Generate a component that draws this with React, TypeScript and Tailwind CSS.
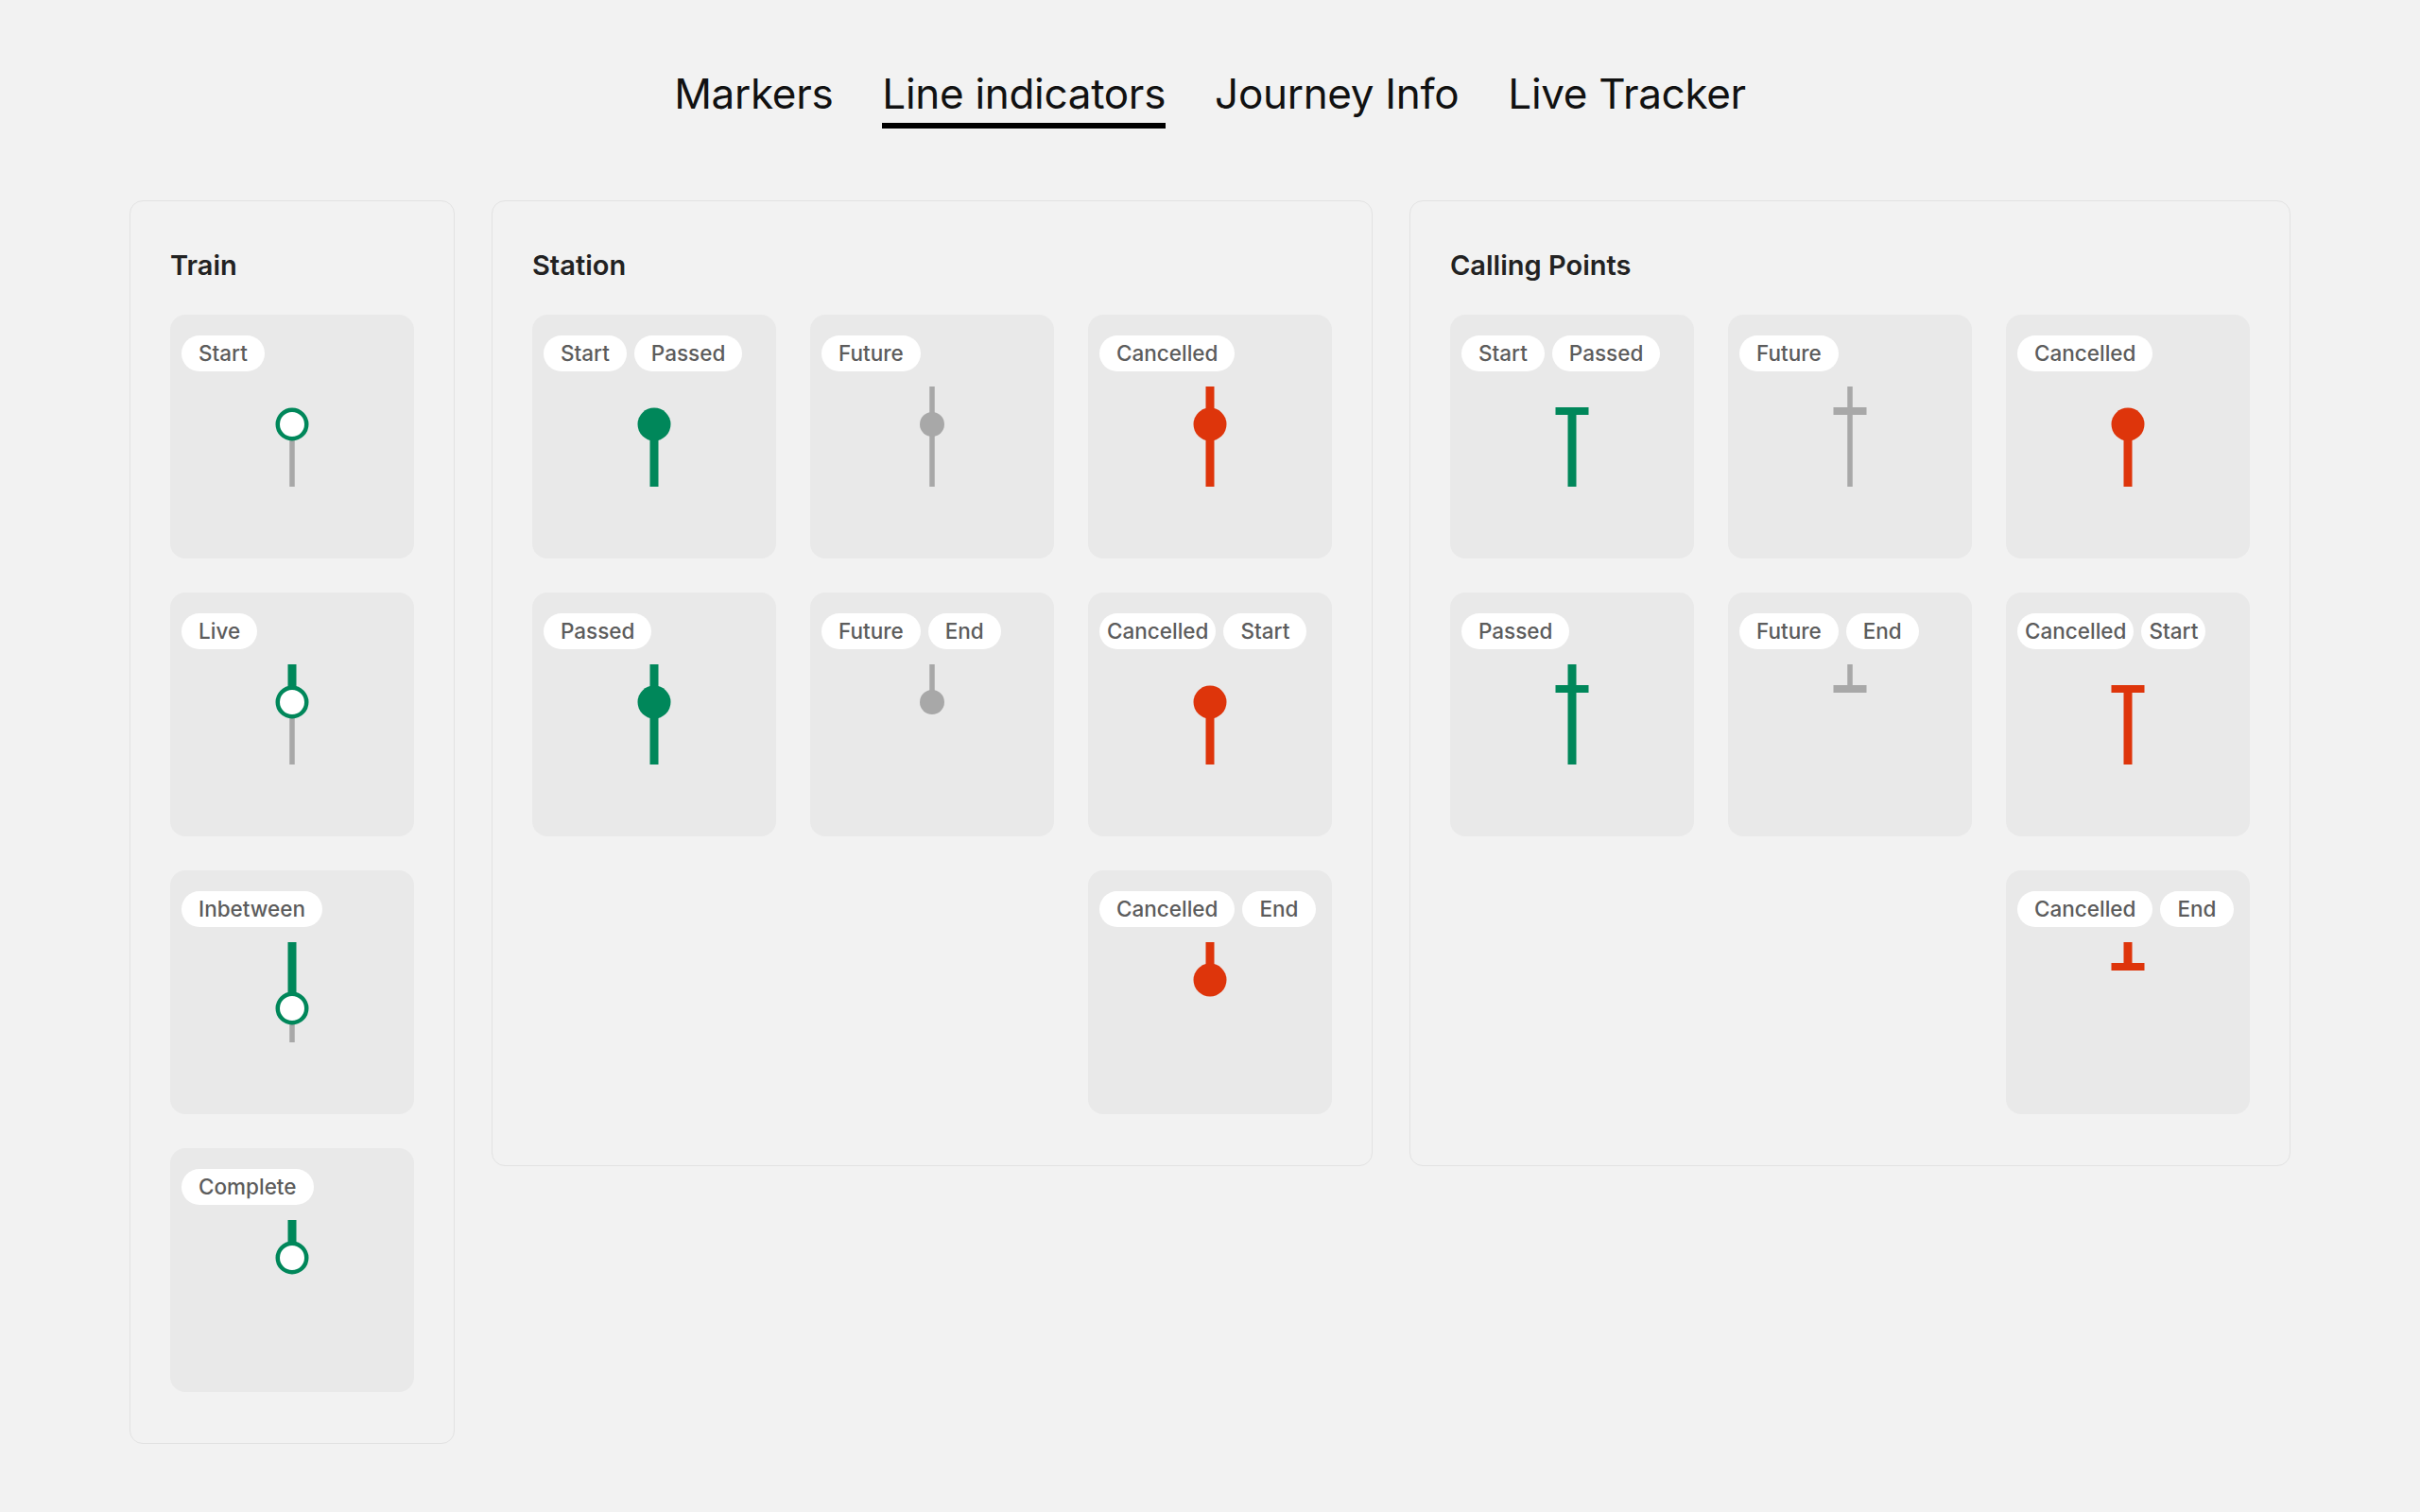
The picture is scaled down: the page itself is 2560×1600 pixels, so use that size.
type Tone = "green" | "red" | "gray";

const COLORS: Record<Tone, string> = {
  green: "#00875A",
  red: "#DE350B",
  gray: "#A8A8A8",
};

type Shape =
  | { kind: "line"; tone: Tone; from: number; to: number }
  | { kind: "dot"; tone: Tone; y: number }
  | { kind: "ring"; y: number }
  | { kind: "bar"; tone: Tone };

type Label = { text: string; tight?: boolean };

type CardData = { labels: Label[]; shapes: Shape[]; col?: number };

// y values are measured from the top of the indicator area (card top + 76)
const MID = 40;
const END = 106;

const trainCards: CardData[] = [
  {
    labels: [{ text: "Start" }],
    shapes: [
      { kind: "line", tone: "gray", from: MID, to: END },
      { kind: "ring", y: MID },
    ],
  },
  {
    labels: [{ text: "Live" }],
    shapes: [
      { kind: "line", tone: "green", from: 0, to: MID },
      { kind: "line", tone: "gray", from: MID, to: END },
      { kind: "ring", y: MID },
    ],
  },
  {
    labels: [{ text: "Inbetween" }],
    shapes: [
      { kind: "line", tone: "green", from: 0, to: 70 },
      { kind: "line", tone: "gray", from: 70, to: END },
      { kind: "ring", y: 70 },
    ],
  },
  {
    labels: [{ text: "Complete" }],
    shapes: [
      { kind: "line", tone: "green", from: 0, to: MID },
      { kind: "ring", y: MID },
    ],
  },
];

const stationCards: CardData[] = [
  {
    labels: [{ text: "Start" }, { text: "Passed" }],
    shapes: [
      { kind: "line", tone: "green", from: MID, to: END },
      { kind: "dot", tone: "green", y: MID },
    ],
  },
  {
    labels: [{ text: "Future" }],
    shapes: [
      { kind: "line", tone: "gray", from: 0, to: END },
      { kind: "dot", tone: "gray", y: MID },
    ],
  },
  {
    labels: [{ text: "Cancelled" }],
    shapes: [
      { kind: "line", tone: "red", from: 0, to: END },
      { kind: "dot", tone: "red", y: MID },
    ],
  },
  {
    labels: [{ text: "Passed" }],
    shapes: [
      { kind: "line", tone: "green", from: 0, to: END },
      { kind: "dot", tone: "green", y: MID },
    ],
  },
  {
    labels: [{ text: "Future" }, { text: "End" }],
    shapes: [
      { kind: "line", tone: "gray", from: 0, to: MID },
      { kind: "dot", tone: "gray", y: MID },
    ],
  },
  {
    labels: [{ text: "Cancelled", tight: true }, { text: "Start" }],
    shapes: [
      { kind: "line", tone: "red", from: MID, to: END },
      { kind: "dot", tone: "red", y: MID },
    ],
  },
  {
    labels: [{ text: "Cancelled" }, { text: "End" }],
    col: 3,
    shapes: [
      { kind: "line", tone: "red", from: 0, to: MID },
      { kind: "dot", tone: "red", y: MID },
    ],
  },
];

const callingCards: CardData[] = [
  {
    labels: [{ text: "Start" }, { text: "Passed" }],
    shapes: [
      { kind: "line", tone: "green", from: 22, to: END },
      { kind: "bar", tone: "green" },
    ],
  },
  {
    labels: [{ text: "Future" }],
    shapes: [
      { kind: "line", tone: "gray", from: 0, to: END },
      { kind: "bar", tone: "gray" },
    ],
  },
  {
    labels: [{ text: "Cancelled" }],
    shapes: [
      { kind: "line", tone: "red", from: MID, to: END },
      { kind: "dot", tone: "red", y: MID },
    ],
  },
  {
    labels: [{ text: "Passed" }],
    shapes: [
      { kind: "line", tone: "green", from: 0, to: END },
      { kind: "bar", tone: "green" },
    ],
  },
  {
    labels: [{ text: "Future" }, { text: "End" }],
    shapes: [
      { kind: "line", tone: "gray", from: 0, to: 26 },
      { kind: "bar", tone: "gray" },
    ],
  },
  {
    labels: [{ text: "Cancelled", tight: true }, { text: "Start", tight: true }],
    shapes: [
      { kind: "line", tone: "red", from: 22, to: END },
      { kind: "bar", tone: "red" },
    ],
  },
  {
    labels: [{ text: "Cancelled" }, { text: "End" }],
    col: 3,
    shapes: [
      { kind: "line", tone: "red", from: 0, to: 26 },
      { kind: "bar", tone: "red" },
    ],
  },
];

function Indicator({ shapes }: { shapes: Shape[] }) {
  return (
    <svg
      width={40}
      height={110}
      viewBox="0 0 40 110"
      className="mx-auto mt-4 block"
    >
      {shapes.map((s, i) => {
        if (s.kind === "line") {
          const w = s.tone === "gray" ? 5.5 : 9;
          return (
            <rect
              key={i}
              x={20 - w / 2}
              y={s.from}
              width={w}
              height={s.to - s.from}
              fill={COLORS[s.tone]}
            />
          );
        }
        if (s.kind === "dot") {
          return (
            <circle
              key={i}
              cx={20}
              cy={s.y}
              r={s.tone === "gray" ? 13 : 17.5}
              fill={COLORS[s.tone]}
            />
          );
        }
        if (s.kind === "ring") {
          return (
            <circle
              key={i}
              cx={20}
              cy={s.y}
              r={15.25}
              fill="#ffffff"
              stroke={COLORS.green}
              strokeWidth={4.5}
            />
          );
        }
        return (
          <rect
            key={i}
            x={2.5}
            y={22}
            width={35}
            height={8}
            fill={COLORS[s.tone]}
          />
        );
      })}
    </svg>
  );
}

function Card({ card }: { card: CardData }) {
  return (
    <div
      className={`flex h-[258px] w-[258px] flex-col rounded-2xl bg-[#e9e9e9] ${
        card.col === 3 ? "col-start-3" : ""
      }`}
    >
      <div className="flex gap-2 px-3 pt-[22px]">
        {card.labels.map((l) => (
          <span
            key={l.text}
            className={`flex h-[38px] items-center whitespace-nowrap rounded-full bg-white text-[22.5px] font-medium text-[#5c5c5c] ${
              l.tight ? "px-[8px]" : "px-[18px]"
            }`}
          >
            {l.text}
          </span>
        ))}
      </div>
      <Indicator shapes={card.shapes} />
    </div>
  );
}

function Panel({
  title,
  cards,
  wide,
}: {
  title: string;
  cards: CardData[];
  wide?: boolean;
}) {
  return (
    <section className="rounded-[14px] border border-[#e2e2e2] px-[42px] pb-[54px] pt-[53px]">
      <h2 className="mb-[38px] text-[29px] font-semibold leading-none text-[#222]">
        {title}
      </h2>
      <div
        className={
          wide
            ? "grid grid-cols-[repeat(3,258px)] gap-9"
            : "flex flex-col gap-9"
        }
      >
        {cards.map((c, i) => (
          <Card key={i} card={c} />
        ))}
      </div>
    </section>
  );
}

const tabs = ["Markers", "Line indicators", "Journey Info", "Live Tracker"];

export default function App() {
  return (
    <div className="min-h-screen bg-[#f2f2f2] font-[Inter,sans-serif] text-[#111]">
      <nav className="flex justify-center gap-[52px] pt-[77px]">
        {tabs.map((t) => (
          <div key={t} className="flex flex-col">
            <span className="text-[44px] leading-none tracking-[-0.3px]">
              {t}
            </span>
            <span
              className={`mt-[9px] h-[6px] ${
                t === "Line indicators" ? "bg-black" : "bg-transparent"
              }`}
            />
          </div>
        ))}
      </nav>
      <main className="mt-[76px] flex items-start justify-center gap-[39px]">
        <Panel title="Train" cards={trainCards} />
        <Panel title="Station" cards={stationCards} wide />
        <Panel title="Calling Points" cards={callingCards} wide />
      </main>
    </div>
  );
}
